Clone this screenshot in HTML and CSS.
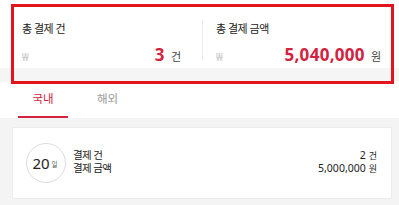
FILE: index.html
```html
<!DOCTYPE html>
<html lang="ko">
<head>
<meta charset="utf-8">
<link rel="stylesheet" href="styles.css">
</head>
<body>
<div class="page">
  <section class="summary">
    <div class="sum-col first">
      <div class="sum-label">총 결제 건</div>
      <div class="sum-row">
        <span class="won">₩</span>
        <span class="sum-value"><b>3</b><span class="unit">건</span></span>
      </div>
    </div>
    <div class="divider"></div>
    <div class="sum-col second">
      <div class="sum-label">총 결제 금액</div>
      <div class="sum-row">
        <span class="won">₩</span>
        <span class="sum-value"><b>5,040,000</b><span class="unit">원</span></span>
      </div>
    </div>
  </section>
  <div class="band"></div>
  <nav class="tabs">
    <div class="tab active">국내</div>
    <div class="tab second-tab">해외</div>
  </nav>
  <section class="list">
    <div class="card">
      <div class="day"><span class="num">20</span><span class="il">일</span></div>
      <div class="labels">
        <div>결제 건</div>
        <div>결제 금액</div>
      </div>
      <div class="values">
        <div>2<span class="u">건</span></div>
        <div>5,000,000<span class="u">원</span></div>
      </div>
    </div>
  </section>
  <div class="highlight"></div>
</div>
</body>
</html>
```
FILE: styles.css
```css
html, body {
  margin: 0;
  padding: 0;
  background: #fff;
}
body {
  font-family: "Noto Sans", "Noto Sans CJK KR", sans-serif;
  color: #222;
  width: 399px;
  height: 205px;
  overflow: hidden;
}
.page {
  position: relative;
  width: 399px;
  height: 205px;
}
.summary {
  display: flex;
  align-items: stretch;
  height: 68px;
  padding: 0 18px 0 22px;
  box-sizing: border-box;
}
.sum-col {
  display: flex;
  flex-direction: column;
  padding-top: 22px;
  box-sizing: border-box;
}
.sum-col.first {
  width: 180px;
  padding-right: 21px;
}
.sum-col.second {
  flex: 1;
  padding-left: 13px;
}
.divider {
  width: 1px;
  background: #ececec;
  margin: 20px 0 8px;
}
.sum-label {
  font-size: 11px;
  line-height: 14px;
  color: #222;
  letter-spacing: -0.5px;
}
.sum-row {
  display: flex;
  justify-content: space-between;
  align-items: baseline;
  margin-top: 7px;
}
.won {
  font-size: 10px;
  color: #c4c4c4;
}
.sum-value b {
  font-family: "Open Sans", "Noto Sans", sans-serif;
  font-weight: 700;
  font-size: 17px;
  color: #d2233f;
  letter-spacing: 0.3px;
}
.unit {
  font-size: 11px;
  color: #444;
  margin-left: 6px;
}
.band {
  height: 14px;
  background: #f5f5f5;
}
.tabs {
  display: flex;
  height: 36px;
  padding-left: 18px;
  gap: 29px;
  box-sizing: border-box;
}
.tab {
  width: 50px;
  text-align: center;
  font-size: 11.5px;
  line-height: 34px;
  color: #999;
  box-sizing: border-box;
}
.tab.second-tab {
  width: 30px;
  text-align: left;
}
.tab.active {
  color: #d2233f;
  border-bottom: 2px solid #d2233f;
}
.list {
  background: #f4f4f4;
  padding: 9px 7px 6px 12px;
  height: 87px;
  box-sizing: border-box;
}
.card {
  background: #fff;
  border: 1px solid #ececec;
  height: 72px;
  box-sizing: border-box;
  display: flex;
  align-items: center;
  padding: 0 14px 0 13px;
}
.day {
  width: 40px;
  height: 40px;
  border: 1px solid #dcdcdc;
  border-radius: 50%;
  box-sizing: border-box;
  display: flex;
  align-items: center;
  justify-content: center;
  margin-right: 7px;
  padding-right: 2px;
}
.day .num {
  font-size: 15px;
  color: #222;
}
.day .il {
  font-size: 6.5px;
  color: #555;
  margin-left: 2px;
  margin-top: 1px;
}
.labels {
  flex: 1;
  font-size: 10.5px;
  line-height: 13.5px;
  letter-spacing: -0.6px;
  color: #222;
  margin-top: -2px;
}
.values {
  text-align: right;
  font-size: 10.5px;
  line-height: 13.5px;
  color: #222;
  margin-top: -2px;
}
.values .u {
  font-size: 9px;
  margin-left: 3px;
}
.highlight {
  position: absolute;
  left: 11px;
  top: 4px;
  width: 383px;
  height: 80px;
  border: 3px solid #e3141b;
  box-sizing: border-box;
  pointer-events: none;
}
```
